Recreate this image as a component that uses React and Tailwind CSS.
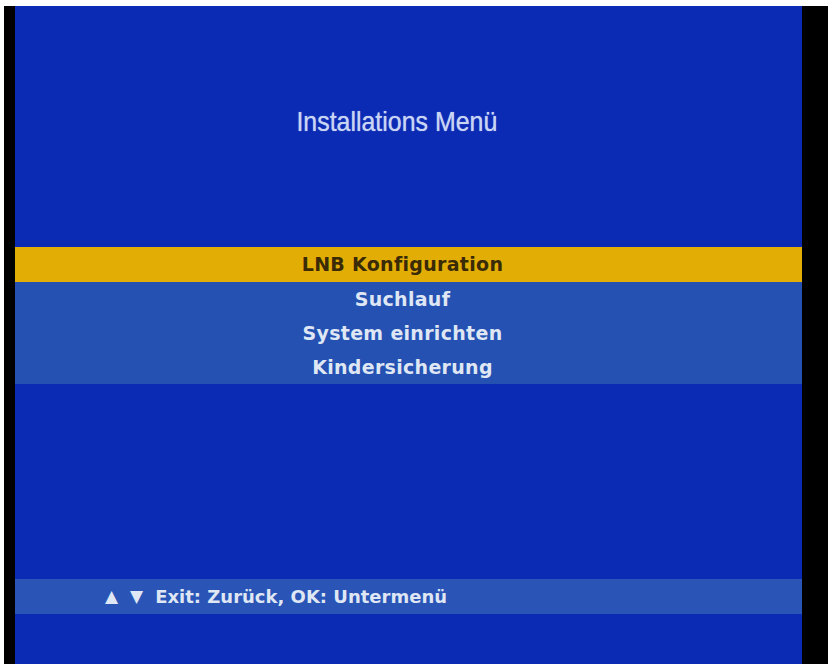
import React from "react";

const menuItems = ["Suchlauf", "System einrichten", "Kindersicherung"];

const App = () => {
  return (
    <div className="w-full h-[667px] bg-white pt-[6px] pb-[3px] px-[4px]">
      <div className="flex h-full">
        {/* left frame edge */}
        <div className="w-[11px] bg-black" />

        {/* TV screen */}
        <div className="flex-1 flex flex-col bg-[#0b2bb4] font-['DejaVu_Sans',sans-serif]">
          {/* Title */}
          <div className="pt-[101px] h-[241px] pr-[23px] text-center">
            <span className="inline-block scale-x-[0.89] font-['Liberation_Sans',Arial,sans-serif] text-[28px] leading-[30px] text-[#c9d5f3] [text-shadow:0_0_1px_#9fb4ea]">
              Installations Menü
            </span>
          </div>

          {/* Menu */}
          <div className="h-[35px] bg-[#e2ae06] flex items-center justify-center pr-[12px] text-[19px] tracking-[0.3px] font-bold text-[#3a2a05]">
            LNB Konfiguration
          </div>
          <div className="bg-[#2451b2]">
            {menuItems.map((item) => (
              <div
                key={item}
                className="h-[34px] flex items-center justify-center pr-[12px] text-[19px] tracking-[0.3px] font-bold text-[#dfe6f4]"
              >
                {item}
              </div>
            ))}
          </div>

          {/* Footer hint bar */}
          <div className="mt-[195px] h-[35px] bg-[#2a55b6] flex items-center pl-[90px] text-[18px] font-bold text-[#dfe6f4]">
            <span className="text-[17px]">▲</span>
            <span className="ml-[12px] text-[17px]">▼</span>
            <span className="ml-[12px]">Exit: Zurück, OK: Untermenü</span>
          </div>
        </div>

        {/* right frame edge */}
        <div className="w-[26px] bg-black" />
      </div>
    </div>
  );
};

export default App;
